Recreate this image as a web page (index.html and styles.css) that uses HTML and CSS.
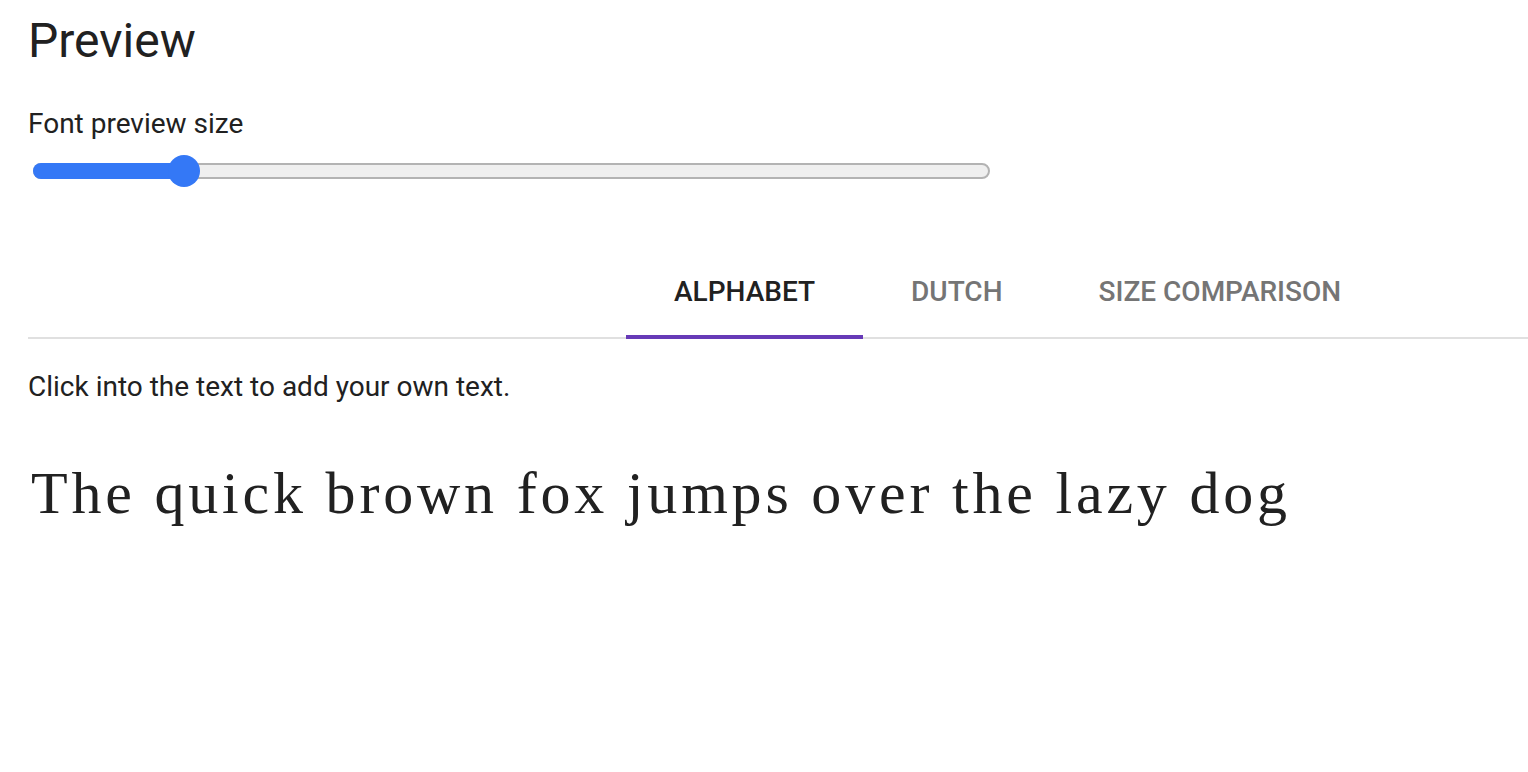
FILE: index.html
```html
<!DOCTYPE html>
<html lang="en">
<head>
<meta charset="utf-8">
<title>Preview</title>
<link rel="stylesheet" href="styles.css">
</head>
<body>
<main class="page">
  <h1 class="title">Preview</h1>
  <div class="size-label">Font preview size</div>
  <div class="slider">
    <div class="track">
      <div class="fill" style="width: 149px"></div>
      <div class="thumb" style="left: 149px"></div>
    </div>
  </div>
  <nav class="tabs">
    <div class="tab-list">
      <div class="tab active">ALPHABET</div>
      <div class="tab">DUTCH</div>
      <div class="tab">SIZE COMPARISON</div>
    </div>
  </nav>
  <p class="hint">Click into the text to add your own text.</p>
  <div class="sample" contenteditable="true">The quick brown fox jumps over the lazy dog</div>
</main>
</body>
</html>
```
FILE: styles.css
```css
html, body {
  margin: 0;
  padding: 0;
  background: #ffffff;
}

body {
  font-family: Roboto, "Noto Sans", sans-serif;
  color: #212121;
}

.page {
  padding-left: 28px;
}

.title {
  margin: 13px 0 0 0;
  font-size: 48px;
  line-height: 56px;
  font-weight: 400;
}

.size-label {
  margin-top: 39px;
  font-size: 28px;
  line-height: 32px;
}

.slider {
  margin-top: 23px;
  padding-left: 5px;
  width: 957px;
}

.track {
  position: relative;
  height: 16px;
  box-sizing: border-box;
  border: 2px solid #b3b3b3;
  border-radius: 8px;
  background: #efefef;
}

.fill {
  position: absolute;
  left: -2px;
  top: -2px;
  bottom: -2px;
  background: #3478f6;
  border-radius: 8px 0 0 8px;
}

.thumb {
  position: absolute;
  top: 50%;
  width: 32px;
  height: 32px;
  margin-left: -16px;
  margin-top: -16px;
  border-radius: 50%;
  background: #3478f6;
}

.tabs {
  margin-top: 64px;
  border-bottom: 2px solid #e0e0e0;
  display: flex;
}

.tab-list {
  display: flex;
  margin-left: 598px;
}

.tab {
  height: 96px;
  box-sizing: border-box;
  padding: 0 48px;
  display: flex;
  align-items: center;
  font-size: 28px;
  font-weight: 500;
  color: #757575;
  margin-bottom: -2px;
  border-bottom: 4px solid transparent;
  padding-top: 4px;
}

.tab.active {
  color: #212121;
  border-bottom-color: #673ab7;
}

.hint {
  margin: 32px 0 0 0;
  font-size: 28px;
  line-height: 32px;
}

.sample {
  margin-top: 50px;
  font-family: "Liberation Serif", "Times New Roman", serif;
  font-size: 60px;
  line-height: 80px;
  letter-spacing: 3.8px;
  outline: none;
  padding-left: 3px;
}
```
